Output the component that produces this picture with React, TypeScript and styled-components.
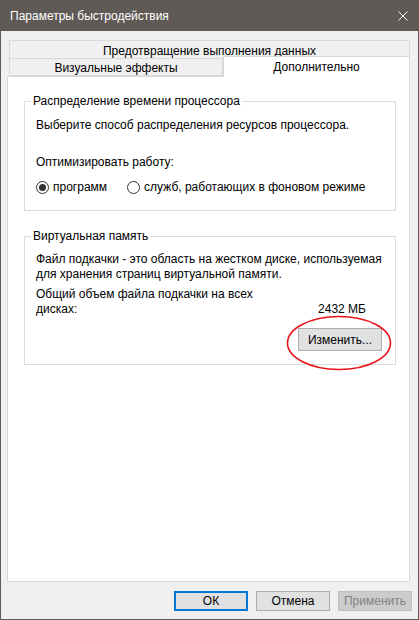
import styled, { createGlobalStyle } from 'styled-components';

const GlobalStyle = createGlobalStyle`
  html, body {
    margin: 0;
    padding: 0;
    background: #ffffff;
  }
  * {
    box-sizing: border-box;
  }
`;

const WindowFrame = styled.div`
  width: 419px;
  height: 620px;
  display: flex;
  flex-direction: column;
  border: 1px solid #5f5a55;
  border-top: none;
  background: #f0f0f0;
  font-family: 'Liberation Sans', Arial, sans-serif;
  font-size: 12px;
  color: #000;
  position: relative;
`;

const TitleBar = styled.div`
  height: 31px;
  margin: 0 -1px;
  padding: 0 11px 0 10px;
  background: #5f5a55;
  color: #fff;
  display: flex;
  align-items: center;
  justify-content: space-between;
  font-size: 12px;
`;

const CloseIcon = styled.svg`
  width: 10px;
  height: 10px;
  margin-top: 1px;
`;

const Body = styled.div`
  flex: 1;
  display: flex;
  flex-direction: column;
  padding: 9px 6px 0 6px;
`;

const TabRow = styled.div`
  display: flex;
  margin-left: 2px;
  width: 401px;
  height: 18px;
  align-items: flex-end;
`;

const Tab = styled.div<{ $active?: boolean; $grow?: boolean }>`
  display: flex;
  align-items: center;
  justify-content: center;
  line-height: 15px;
  border: 1px solid #d9d9d9;
  background: ${({ $active }) => ($active ? '#ffffff' : '#f0f0f0')};
  flex: ${({ $grow }) => ($grow ? '1' : 'none')};
  width: ${({ $grow }) => ($grow ? 'auto' : '214px')};
  height: ${({ $active }) => ($active ? '21px' : '18px')};
  margin-top: ${({ $active }) => ($active ? '-3px' : '0')};
  margin-bottom: ${({ $active }) => ($active ? '-1px' : '0')};
  padding-top: ${({ $active }) => ($active ? '0' : '2px')};
  border-bottom: ${({ $active }) => ($active ? 'none' : '1px solid #d9d9d9')};
  position: relative;
  z-index: ${({ $active }) => ($active ? 2 : 0)};
`;

const TopTab = styled(Tab)`
  flex: 1;
  border-bottom: none;
  padding-top: 4px;
`;

const Panel = styled.div`
  width: 403px;
  height: 506px;
  background: #ffffff;
  border: 1px solid #d9d9d9;
  padding-top: 17px;
  display: flex;
  flex-direction: column;
  gap: 18px;
`;

const Group = styled.fieldset<{ $bottom: number }>`
  margin: 0 13px 0 16px;
  padding: 0 13px ${({ $bottom }) => $bottom}px 11px;
  border: 1px solid #dcdcdc;
  min-width: 0;
`;

const Legend = styled.legend`
  padding: 0 2px;
  margin-left: -5px;
  line-height: 15px;
  height: 15px;
`;

const Line = styled.div<{ $top: number }>`
  margin-top: ${({ $top }) => $top}px;
  line-height: 15px;
  white-space: nowrap;
`;

const RadioRow = styled.div`
  margin-top: 10px;
  display: flex;
  align-items: center;
  height: 15px;
`;

const RadioLabel = styled.label<{ $gap: number }>`
  display: flex;
  align-items: center;
  gap: 4px;
  margin-right: ${({ $gap }) => $gap}px;
  line-height: 15px;
`;

const RadioCircle = styled.span<{ $checked?: boolean }>`
  width: 13px;
  height: 13px;
  border-radius: 50%;
  border: 1px solid #333;
  background: #fff;
  display: inline-flex;
  align-items: center;
  justify-content: center;
  &::after {
    content: '';
    width: 7px;
    height: 7px;
    border-radius: 50%;
    background: ${({ $checked }) => ($checked ? '#333' : 'transparent')};
  }
`;

const SizeRow = styled.div`
  margin-top: 5px;
  display: flex;
  align-items: flex-end;
  justify-content: space-between;
  line-height: 15px;
`;

const SizeValue = styled.div`
  margin-right: 16px;
`;

const ButtonRow = styled.div<{ $top: number }>`
  display: flex;
  justify-content: flex-end;
  gap: 8px;
  margin-top: ${({ $top }) => $top}px;
`;

const Button = styled.button<{ $w: number; $h: number; $variant?: 'default' | 'disabled' }>`
  width: ${({ $w }) => $w}px;
  height: ${({ $h }) => $h}px;
  padding: 0;
  font-family: inherit;
  font-size: 12px;
  background: ${({ $variant }) => ($variant === 'disabled' ? '#cccccc' : '#e1e1e1')};
  color: ${({ $variant }) => ($variant === 'disabled' ? '#838383' : '#000')};
  border: ${({ $variant }) =>
    $variant === 'default'
      ? '2px solid #0078d7'
      : $variant === 'disabled'
      ? '1px solid #bfbfbf'
      : '1px solid #adadad'};
  border-radius: 0;
`;

const EditWrap = styled.div`
  position: relative;
`;

const Highlight = styled.svg`
  position: absolute;
  left: -12px;
  top: -13px;
  width: 106px;
  height: 56px;
  pointer-events: none;
  overflow: visible;
`;

const App = () => {
  return (
    <>
      <GlobalStyle />
      <WindowFrame>
        <TitleBar>
          <span>Параметры быстродействия</span>
          <CloseIcon viewBox="0 0 10 10">
            <path d="M0.5 0.5 L9.5 9.5 M9.5 0.5 L0.5 9.5" stroke="#fff" strokeWidth="1" />
          </CloseIcon>
        </TitleBar>
        <Body>
          <TabRow>
            <TopTab $grow>Предотвращение выполнения данных</TopTab>
          </TabRow>
          <TabRow>
            <Tab>Визуальные эффекты</Tab>
            <Tab $active $grow>
              Дополнительно
            </Tab>
          </TabRow>
          <Panel>
            <Group $bottom={15}>
              <Legend>Распределение времени процессора</Legend>
              <Line $top={9}>Выберите способ распределения ресурсов процессора.</Line>
              <Line $top={22}>Оптимизировать работу:</Line>
              <RadioRow>
                <RadioLabel $gap={20}>
                  <RadioCircle $checked />
                  программ
                </RadioLabel>
                <RadioLabel $gap={0}>
                  <RadioCircle />
                  служб, работающих в фоновом режиме
                </RadioLabel>
              </RadioRow>
            </Group>
            <Group $bottom={13}>
              <Legend>Виртуальная память</Legend>
              <Line $top={8}>Файл подкачки - это область на жестком диске, используемая</Line>
              <Line $top={0}>для хранения страниц виртуальной памяти.</Line>
              <SizeRow>
                <div>
                  Общий объем файла подкачки на всех
                  <br />
                  дисках:
                </div>
                <SizeValue>2432 МБ</SizeValue>
              </SizeRow>
              <ButtonRow $top={11}>
                <EditWrap>
                  <Button $w={84} $h={23}>
                    Изменить...
                  </Button>
                  <Highlight viewBox="0 0 106 56">
                    <ellipse cx="53" cy="28" rx="51.5" ry="26.5" fill="none" stroke="#e8141c" strokeWidth="1.6" />
                  </Highlight>
                </EditWrap>
              </ButtonRow>
            </Group>
          </Panel>
          <ButtonRow $top={9}>
            <Button $w={74} $h={20} $variant="default">
              ОК
            </Button>
            <Button $w={74} $h={20}>
              Отмена
            </Button>
            <Button $w={74} $h={20} $variant="disabled">
              Применить
            </Button>
          </ButtonRow>
        </Body>
      </WindowFrame>
    </>
  );
};

export default App;
